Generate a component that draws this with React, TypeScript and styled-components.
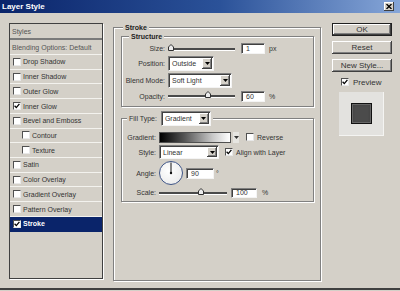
import { FC, ReactNode } from "react";
import styled, { createGlobalStyle } from "styled-components";

const GlobalStyle = createGlobalStyle`
  html, body {
    margin: 0;
    padding: 0;
    background: #d4d0c8;
  }
`;

const Dialog = styled.div`
  width: 400px;
  height: 288px;
  border-bottom: 2px solid #404040;
  background: #d4d0c8;
  display: flex;
  flex-direction: column;
  font-family: "Liberation Sans", Arial, sans-serif;
  font-size: 7px;
  color: #2a2a2a;
  overflow: hidden;
`;

const TitleBar = styled.div`
  height: 13px;
  flex: none;
  display: flex;
  align-items: center;
  justify-content: space-between;
  padding: 0 6px 0 2px;
  background: linear-gradient(to right, #0a246a 0%, #2b5299 55%, #86a6d8 100%);
`;

const Title = styled.span`
  color: #fff;
  font-weight: bold;
  font-size: 8px;
  line-height: 13px;
`;

const CloseButton = styled.div`
  width: 10px;
  height: 9px;
  box-sizing: border-box;
  background: #d4d0c8;
  box-shadow: inset -1px -1px #404040, inset 1px 1px #fff;
  display: flex;
  align-items: center;
  justify-content: center;
`;

const Body = styled.div`
  display: flex;
  align-items: flex-start;
  padding: 10px 0 0 9px;
`;

/* ---------- left list ---------- */

const StyleList = styled.div`
  width: 94px;
  height: 256px;
  box-sizing: border-box;
  border: 1px solid #404040;
  box-shadow: 1px 1px 0 #fff;
  display: flex;
  flex-direction: column;
`;

const ListHeader = styled.div<{ $thick?: boolean }>`
  height: 14px;
  flex: none;
  padding-left: 2px;
  display: flex;
  align-items: center;
  color: #555;
  border-bottom: ${(p) => (p.$thick ? "2px solid #7a7a7a" : "1px solid #f3f2ee")};
`;

const ListRow = styled.div<{ $indent?: boolean; $selected?: boolean }>`
  height: 13.73px;
  flex: none;
  display: flex;
  align-items: center;
  gap: 2px;
  padding-left: ${(p) => (p.$indent ? 12 : 3)}px;
  border-bottom: 1px solid ${(p) => (p.$selected ? "#0a246a" : "#f3f2ee")};
  background: ${(p) => (p.$selected ? "#0a246a" : "transparent")};
  color: ${(p) => (p.$selected ? "#fff" : "#333")};
  font-weight: ${(p) => (p.$selected ? "bold" : "normal")};
`;

const Box = styled.span`
  width: 8px;
  height: 8px;
  flex: none;
  box-sizing: border-box;
  background: #fff;
  border: 1px solid;
  border-color: #505050 #e8e8e8 #e8e8e8 #505050;
  display: flex;
  align-items: center;
  justify-content: center;
`;

const Check: FC<{ checked?: boolean }> = ({ checked }) => (
  <Box>
    {checked && (
      <svg width="6" height="6" viewBox="0 0 6 6">
        <path d="M0.6 2.8 L2.3 4.6 L5.4 0.8" fill="none" stroke="#000" strokeWidth="1.3" />
      </svg>
    )}
  </Box>
);

/* ---------- group boxes ---------- */

const Group = styled.fieldset<{ $width: number; $height?: number; $ml?: number; $mt?: number }>`
  margin: ${(p) => p.$mt ?? 0}px 0 0 ${(p) => p.$ml ?? 0}px;
  padding: 0;
  min-width: 0;
  width: ${(p) => p.$width}px;
  height: ${(p) => (p.$height ? `${p.$height}px` : "auto")};
  box-sizing: border-box;
  border: 1px solid #808080;
  box-shadow: 1px 1px 0 #fff, inset 1px 1px 0 #fff;
`;

const Legend = styled.legend<{ $ml: number }>`
  margin-left: ${(p) => p.$ml}px;
  padding: 0 2px;
  font-weight: bold;
  line-height: 9px;
  background: #d4d0c8;
  color: #222;
  display: flex;
  align-items: center;
  gap: 4px;
`;

const PlainLegend = styled(Legend)`
  font-weight: normal;
  color: #333;
`;

const Rows = styled.div<{ $labelWidth: number; $rows: string; $pt: number; $pb: number }>`
  display: grid;
  grid-template-columns: ${(p) => p.$labelWidth}px 1fr;
  grid-template-rows: ${(p) => p.$rows};
  column-gap: 3px;
  row-gap: 2px;
  padding: ${(p) => p.$pt}px 0 ${(p) => p.$pb}px 1px;
  align-items: center;
`;

const Label = styled.span`
  text-align: right;
  color: #333;
  white-space: nowrap;
`;

const Controls = styled.div`
  display: flex;
  align-items: center;
  height: 100%;
`;

/* ---------- controls ---------- */

const Field = styled.div<{ $width: number; $height: number; $ml?: number }>`
  width: ${(p) => p.$width}px;
  height: ${(p) => p.$height}px;
  margin-left: ${(p) => p.$ml ?? 0}px;
  box-sizing: border-box;
  flex: none;
  background: #fff;
  border: 1px solid;
  border-color: #808080 #f4f4f4 #f4f4f4 #808080;
  box-shadow: inset 1px 1px 0 #404040;
  display: flex;
  align-items: center;
  padding-left: 4px;
  color: #333;
`;

const Unit = styled.span<{ $ml: number }>`
  margin-left: ${(p) => p.$ml}px;
  color: #333;
`;

const SelectBox = styled(Field)`
  padding: 1px 1px 1px 3px;
  justify-content: space-between;
`;

const ArrowButton = styled.span`
  width: 10px;
  height: 100%;
  box-sizing: border-box;
  background: #d4d0c8;
  box-shadow: inset -1px -1px #404040, inset 1px 1px #fff, inset -2px -2px #808080;
  display: flex;
  align-items: center;
  justify-content: center;
`;

const Triangle: FC<{ color?: string }> = ({ color = "#000" }) => (
  <svg width="5" height="3" viewBox="0 0 5 3">
    <path d="M0 0 H5 L2.5 3 Z" fill={color} />
  </svg>
);

const Select: FC<{ width: number; height: number; value: string }> = ({ width, height, value }) => (
  <SelectBox $width={width} $height={height}>
    <span>{value}</span>
    <ArrowButton>
      <Triangle />
    </ArrowButton>
  </SelectBox>
);

const SliderTrack = styled.div<{ $width: number }>`
  position: relative;
  width: ${(p) => p.$width}px;
  height: 2px;
  flex: none;
  background: #4a4a4a;
  border-bottom: 1px solid #fff;
  margin-top: 1px;
`;

const Thumb = styled.svg`
  position: absolute;
  top: -4px;
`;

const Slider: FC<{ width: number; pos: number }> = ({ width, pos }) => (
  <SliderTrack $width={width}>
    <Thumb width="6" height="7" viewBox="0 0 6 7" style={{ left: `${pos * (width - 6)}px` }}>
      <path d="M0.5 6.5 V3 L3 0.5 L5.5 3 V6.5 Z" fill="#ececec" stroke="#303030" strokeWidth="1" />
    </Thumb>
  </SliderTrack>
);

const GradientBar = styled.div`
  width: 72px;
  height: 11px;
  box-sizing: border-box;
  flex: none;
  border: 1px solid #505050;
  background: linear-gradient(to right, #000 0%, #555 35%, #c8c8c8 75%, #fff 100%);
`;

const GradientArrow = styled.span`
  width: 6px;
  height: 11px;
  margin-left: 2px;
  flex: none;
  display: flex;
  align-items: center;
  justify-content: center;
  background: #e6e5e1;
`;

const CheckLabel = styled.span<{ $ml: number }>`
  display: flex;
  align-items: center;
  gap: 3px;
  margin-left: ${(p) => p.$ml}px;
  color: #333;
`;

const Dial = styled.div`
  width: 24px;
  height: 24px;
  box-sizing: border-box;
  flex: none;
  border-radius: 50%;
  border: 1px solid #3f5587;
  background: radial-gradient(circle at 40% 40%, #fff 0%, #eeeeee 70%, #d8d8d8 100%);
  display: flex;
  align-items: center;
  justify-content: center;
`;

/* ---------- right column ---------- */

const ButtonColumn = styled.div`
  margin-left: 11px;
  width: 60px;
  display: flex;
  flex-direction: column;
  gap: 5px;
`;

const DialogButton = styled.div<{ $default?: boolean }>`
  height: 13px;
  box-sizing: border-box;
  display: flex;
  align-items: center;
  justify-content: center;
  font-size: 8px;
  color: #333;
  background: #d4d0c8;
  border: ${(p) => (p.$default ? "1px solid #202020" : "none")};
  box-shadow: inset -1px -1px #404040, inset 1px 1px #fff, inset -2px -2px #808080;
`;

const PreviewRow = styled.div`
  display: flex;
  align-items: center;
  gap: 4px;
  height: 10px;
  padding-left: 9px;
  font-size: 8px;
  color: #333;
`;

const Swatch = styled.div`
  margin-left: 7px;
  width: 45px;
  height: 44px;
  box-sizing: border-box;
  background: #e3e2df;
  border-right: 1px solid #f4f4f2;
  border-bottom: 1px solid #f4f4f2;
  display: flex;
  align-items: center;
  justify-content: center;
`;

const SwatchSquare = styled.div`
  width: 21px;
  height: 21px;
  box-sizing: border-box;
  border: 1px solid #111;
  background: #4b4b4b;
  box-shadow: inset 0 0 0 1px #666, inset 0 0 3px #333;
`;

type Effect = { name: string; checked?: boolean; indent?: boolean; selected?: boolean };

const effects: Effect[] = [
  { name: "Drop Shadow" },
  { name: "Inner Shadow" },
  { name: "Outer Glow" },
  { name: "Inner Glow", checked: true },
  { name: "Bevel and Emboss" },
  { name: "Contour", indent: true },
  { name: "Texture", indent: true },
  { name: "Satin" },
  { name: "Color Overlay" },
  { name: "Gradient Overlay" },
  { name: "Pattern Overlay" },
  { name: "Stroke", checked: true, selected: true },
];

const Row: FC<{ label: string; children: ReactNode }> = ({ label, children }) => (
  <>
    <Label>{label}</Label>
    <Controls>{children}</Controls>
  </>
);

export default function App() {
  return (
    <Dialog>
      <GlobalStyle />
      <TitleBar>
        <Title>Layer Style</Title>
        <CloseButton>
          <svg width="6" height="5" viewBox="0 0 6 5">
            <path d="M0.5 0 L5.5 5 M5.5 0 L0.5 5" stroke="#000" strokeWidth="1.3" />
          </svg>
        </CloseButton>
      </TitleBar>
      <Body>
        <StyleList>
          <ListHeader $thick>Styles</ListHeader>
          <ListHeader>Blending Options: Default</ListHeader>
          {effects.map((e) => (
            <ListRow key={e.name} $indent={e.indent} $selected={e.selected}>
              <Check checked={e.checked} />
              {e.name}
            </ListRow>
          ))}
        </StyleList>

        <Group $width={208} $height={258} $ml={10}>
          <Legend $ml={9}>Stroke</Legend>
          <Group $width={193} $ml={7}>
            <Legend $ml={7}>Structure</Legend>
            <Rows $labelWidth={42} $rows="11px 15px 15px 12px" $pt={2} $pb={4}>
              <Row label="Size:">
                <Slider width={67} pos={0} />
                <Field $width={24} $height={11} $ml={6}>1</Field>
                <Unit $ml={4}>px</Unit>
              </Row>
              <Row label="Position:">
                <Select width={46} height={15} value="Outside" />
              </Row>
              <Row label="Blend Mode:">
                <Select width={64} height={15} value="Soft Light" />
              </Row>
              <Row label="Opacity:">
                <Slider width={67} pos={0.6} />
                <Field $width={24} $height={11} $ml={6}>60</Field>
                <Unit $ml={4}>%</Unit>
              </Row>
            </Rows>
          </Group>

          <Group $width={193} $ml={7} $mt={4}>
            <PlainLegend $ml={5}>
              Fill Type:
              <Select width={50} height={15} value="Gradient" />
            </PlainLegend>
            <Rows $labelWidth={33} $rows="12px 14px 24px 11px" $pt={5} $pb={3}>
              <Row label="Gradient:">
                <GradientBar />
                <GradientArrow>
                  <Triangle color="#333" />
                </GradientArrow>
                <CheckLabel $ml={7}>
                  <Check />
                  Reverse
                </CheckLabel>
              </Row>
              <Row label="Style:">
                <Select width={60} height={14} value="Linear" />
                <CheckLabel $ml={6}>
                  <Check checked />
                  Align with Layer
                </CheckLabel>
              </Row>
              <Row label="Angle:">
                <Dial>
                  <svg width="22" height="22" viewBox="0 0 22 22">
                    <path d="M11 11 V0.5" stroke="#111" strokeWidth="1" />
                    <circle cx="11" cy="11" r="1.2" fill="#111" />
                  </svg>
                </Dial>
                <Field $width={28} $height={11} $ml={3}>90</Field>
                <Unit $ml={2}>°</Unit>
              </Row>
              <Row label="Scale:">
                <Slider width={68} pos={0.63} />
                <Field $width={26} $height={10} $ml={4}>100</Field>
                <Unit $ml={5}>%</Unit>
              </Row>
            </Rows>
          </Group>
        </Group>

        <ButtonColumn>
          <DialogButton $default>OK</DialogButton>
          <DialogButton>Reset</DialogButton>
          <DialogButton>New Style...</DialogButton>
          <PreviewRow>
            <Check checked />
            Preview
          </PreviewRow>
          <Swatch>
            <SwatchSquare />
          </Swatch>
        </ButtonColumn>
      </Body>
    </Dialog>
  );
}
